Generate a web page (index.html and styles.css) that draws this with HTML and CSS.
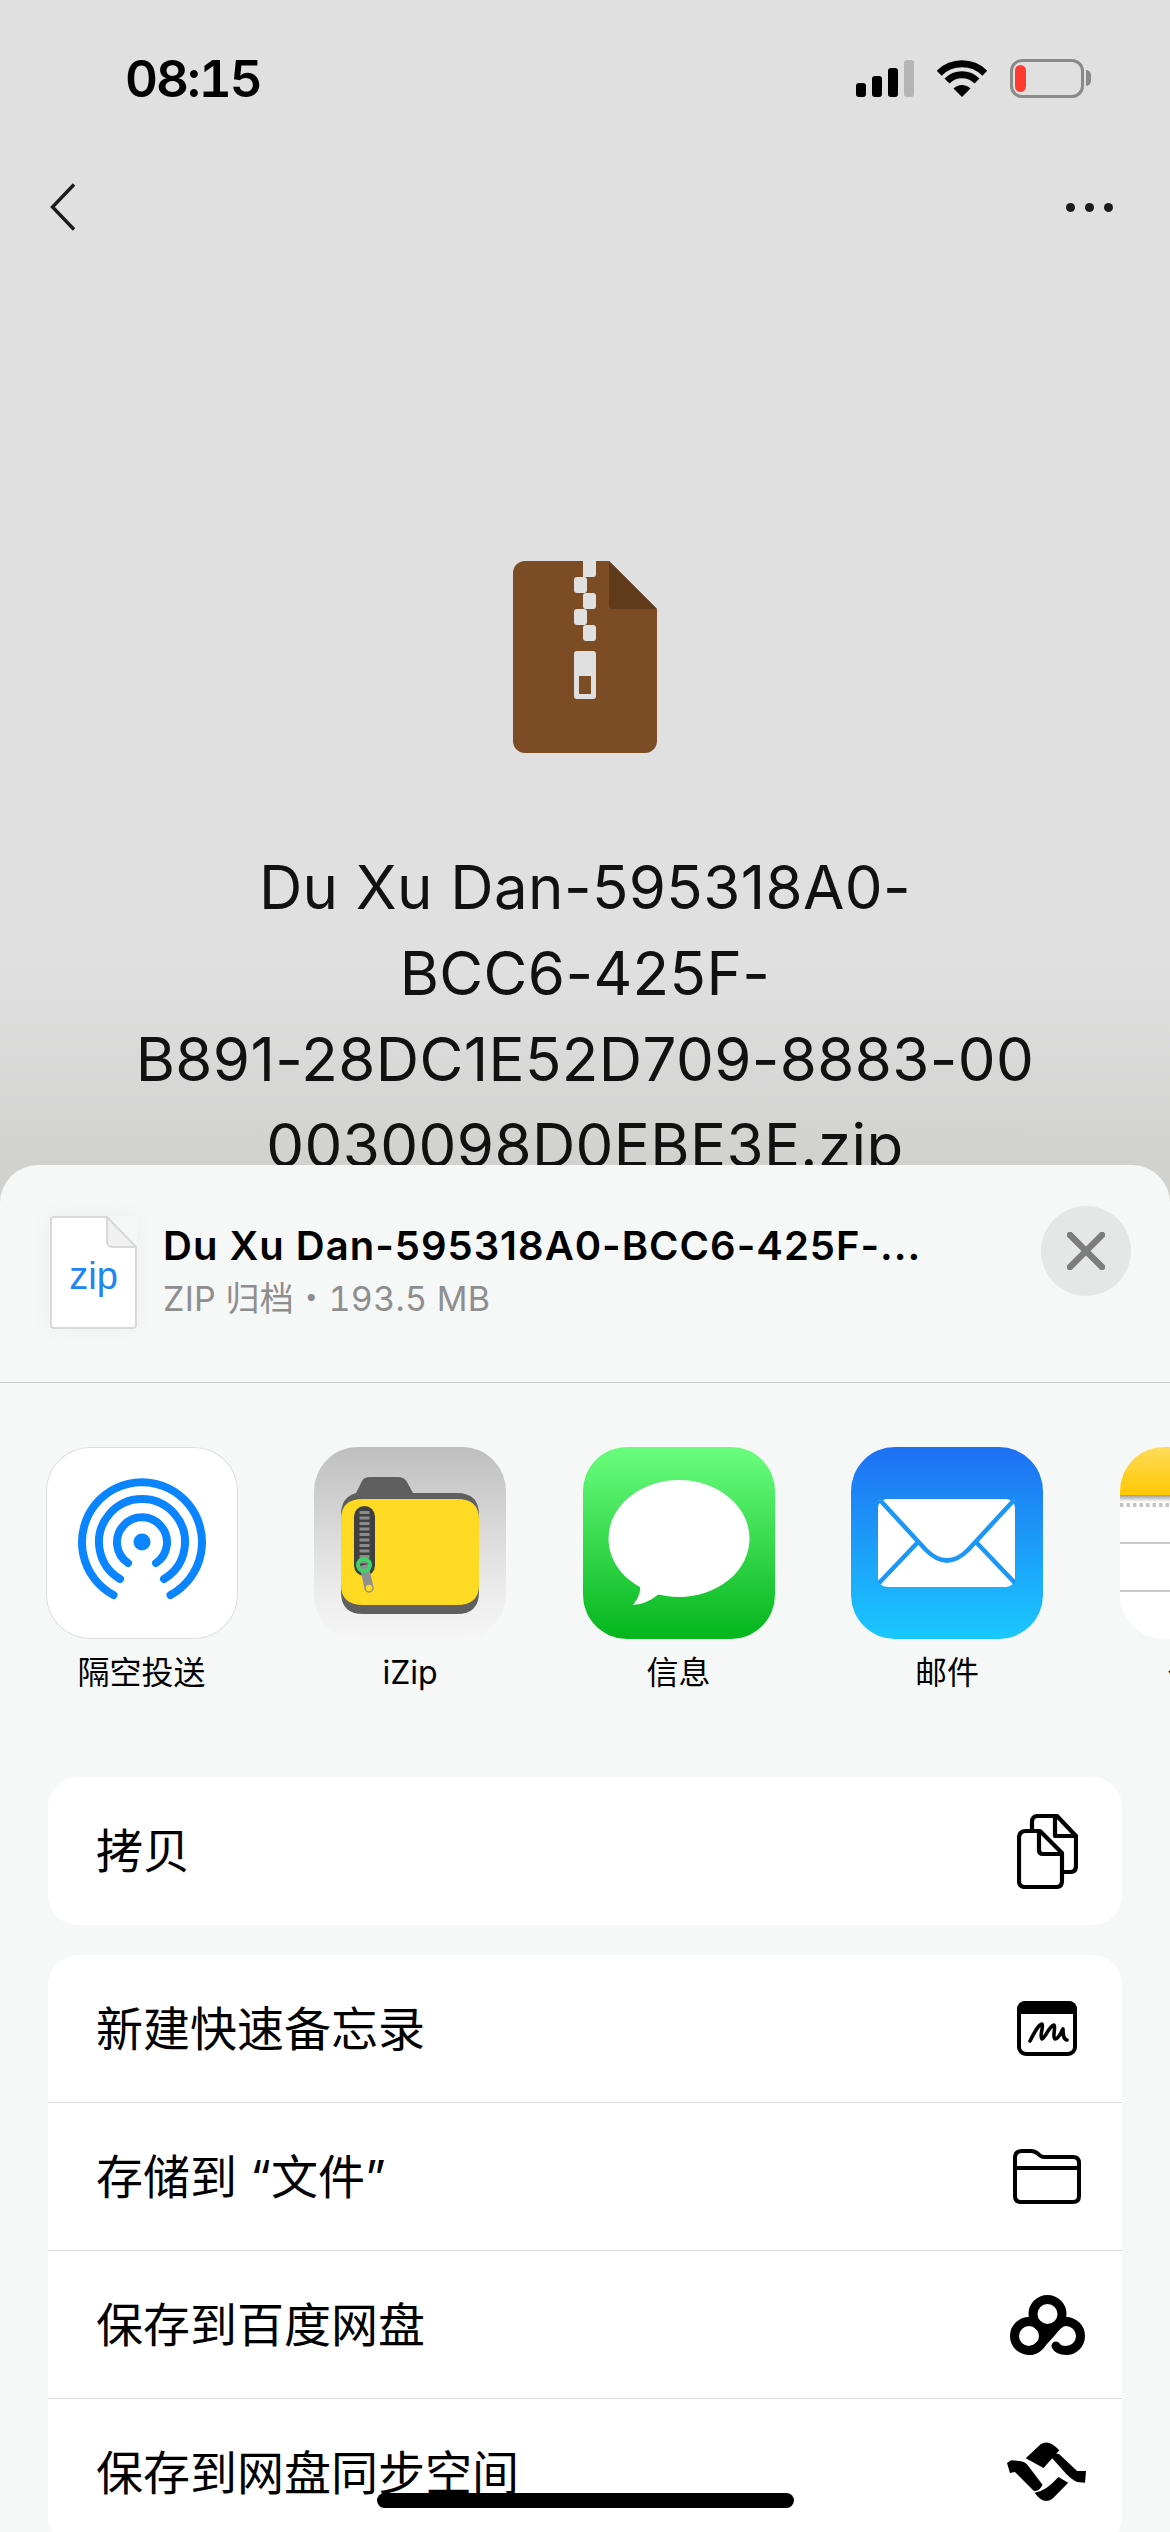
FILE: index.html
```html
<!DOCTYPE html>
<html lang="zh-CN">
<head>
<meta charset="utf-8">
<title>Share sheet</title>
<link rel="stylesheet" href="styles.css">
</head>
<body>
<div class="screen">
  <header class="status">
    <span class="time">08:15</span>
    <div class="status-icons">
      <div class="signal">
        <i class="bar b1"></i><i class="bar b2"></i><i class="bar b3"></i><i class="bar b4"></i>
      </div>
      <svg class="wifi" viewBox="0 0 50 37"><g fill="none" stroke="#000" stroke-width="7"><path d="M2.2 13.2A32.5 32.5 0 0 1 47.8 13.2"/><path d="M10 21A21 21 0 0 1 40 21"/></g><path d="M16.5 28.5A12 12 0 0 1 33.5 28.5L25 37Z" fill="#000"/></svg>
      <div class="battery"><div class="battery-body"><i class="battery-level"></i></div><i class="battery-nub"></i></div>
    </div>
  </header>
  <nav class="nav">
    <svg class="back" viewBox="0 0 26 48"><path d="M24 1.5L2.5 24L24 46.5" fill="none" stroke="#1c1c1c" stroke-width="3.4"/></svg>
    <div class="more"><i></i><i></i><i></i></div>
  </nav>
  <main class="preview">
    <svg class="zip-big" viewBox="0 0 144 192">
      <path d="M12 0H96L144 48V180A12 12 0 0 1 132 192H12A12 12 0 0 1 0 180V12A12 12 0 0 1 12 0Z" fill="#7c4c25"/>
      <path d="M96 0L144 48H100A4 4 0 0 1 96 44Z" fill="#5f3b1c"/>
      <g fill="#e0e0e0">
        <path d="M70 0H83V13A3 3 0 0 1 80 16H70Z"/>
        <rect x="61" y="16" width="13" height="16" rx="3"/>
        <rect x="70" y="32" width="13" height="16" rx="3"/>
        <rect x="61" y="48" width="13" height="16" rx="3"/>
        <rect x="70" y="64" width="13" height="16" rx="3"/>
        <path fill-rule="evenodd" d="M64 90H80A3 3 0 0 1 83 93V135A3 3 0 0 1 80 138H64A3 3 0 0 1 61 135V93A3 3 0 0 1 64 90ZM66 115V133H78V115Z"/>
      </g>
    </svg>
    <h1 class="doc-title">Du Xu Dan-595318A0-<br>BCC6-425F-<br>B891-28DC1E52D709-8883-00<br>0030098D0EBE3E.zip</h1>
  </main>

  <section class="sheet">
    <div class="sheet-head">
      <div class="file-icon">
        <svg class="file-shape" viewBox="0 0 87 113"><path d="M3 1H57L86 31V109A3 3 0 0 1 83 112H4A3 3 0 0 1 1 109V3A2 2 0 0 1 3 1Z" fill="#fff" stroke="#d9d9d9" stroke-width="2"/><path d="M57 1L86 31H62A5 5 0 0 1 57 26Z" fill="#f0f0f0" stroke="#d9d9d9" stroke-width="2"/></svg>
        <span class="file-ext">zip</span>
      </div>
      <div class="file-meta">
        <div class="file-name">Du Xu Dan-595318A0-BCC6-425F-...</div>
        <div class="file-sub">ZIP 归档・193.5 MB</div>
      </div>
      <div class="close">
        <svg viewBox="0 0 38 38"><path d="M3 3L35 35M35 3L3 35" stroke="#7d7d7d" stroke-width="6.5" stroke-linecap="round"/></svg>
      </div>
    </div>

    <div class="apps">
      <div class="app">
        <div class="app-icon airdrop">
          <svg viewBox="0 0 192 192"><g transform="translate(96 95)" fill="none" stroke="#0a84ff" stroke-linecap="round"><circle r="8.5" fill="#0a84ff" stroke="none"/><path stroke-width="8" d="M-28.5 53A60 60 0 1 1 28.5 53"/><path stroke-width="8" d="M-22 37A43 43 0 1 1 22 37"/><path stroke-width="8" d="M-14 21A25 25 0 1 1 14 21"/></g></svg>
        </div>
        <span class="app-label">隔空投送</span>
      </div>
      <div class="app">
        <div class="app-icon izip">
          <svg viewBox="0 0 192 192">
            <path d="M27 68Q27 50 42 46L48 34Q50 30 56 30H84Q90 30 93 35L99 46H143Q165 46 165 68V145Q165 167 143 167H49Q27 167 27 145Z" fill="#5f5f5f"/>
            <path d="M27 72Q27 52 49 52H143Q165 52 165 72V138Q165 158 143 158H49Q27 158 27 138Z" fill="#fedb22"/>
            <rect x="40" y="59" width="21" height="70" rx="10.5" fill="#3f3f3f"/>
            <path d="M50.5 64V122" stroke="#8b8b8b" stroke-width="10" stroke-dasharray="3 2.5"/>
            <path d="M50 118L55 141" stroke="#909090" stroke-width="9"/>
            <circle cx="50" cy="118" r="6" fill="none" stroke="#3fd46a" stroke-width="4"/>
            <circle cx="55" cy="141" r="4" fill="#fedb22" stroke="#909090" stroke-width="1.5"/>
          </svg>
        </div>
        <span class="app-label">iZip</span>
      </div>
      <div class="app">
        <div class="app-icon messages">
          <svg viewBox="0 0 192 192"><ellipse cx="96" cy="91.500" rx="70.500" ry="58.500" fill="#fff"/><path d="M56 135Q60 146 50 158Q62 158 76 147Z" fill="#fff"/></svg>
        </div>
        <span class="app-label">信息</span>
      </div>
      <div class="app">
        <div class="app-icon mail">
          <svg viewBox="0 0 192 192"><rect x="27" y="52" width="137" height="88" rx="9" fill="#fff"/><g fill="none" stroke="#1d97f7" stroke-width="4.500"><path d="M28 52L75 103Q96 124 117 103L164 52"/><path d="M28 136L68 94M164 136L124 94"/></g></svg>
        </div>
        <span class="app-label">邮件</span>
      </div>
      <div class="app">
        <div class="app-icon notes">
          <svg viewBox="0 0 192 192"><defs><linearGradient id="ng" x1="0" y1="0" x2="0" y2="1"><stop offset="0" stop-color="#fedb5c"/><stop offset="1" stop-color="#ffc800"/></linearGradient><linearGradient id="ns" x1="0" y1="0" x2="0" y2="1"><stop offset="0" stop-color="#9a9a9a"/><stop offset="1" stop-color="#fff"/></linearGradient></defs><rect width="192" height="48" fill="url(#ng)"/><rect y="48" width="192" height="7" fill="url(#ns)"/><path d="M0 58H192" stroke="#c4c4c4" stroke-width="4" stroke-dasharray="3.500 3"/><path d="M0 96H192M0 144H192" stroke="#c9c9c9" stroke-width="2"/></svg>
        </div>
        <span class="app-label">备忘录</span>
      </div>
    </div>

    <div class="actions">
      <div class="card">
        <div class="row row-first">
          <span class="row-label">拷贝</span>
          <span class="row-icon"><svg class="ic-copy" viewBox="0 0 61 75"><g fill="none" stroke="#000" stroke-width="4.200" stroke-linejoin="round"><path d="M15 17V8Q15 2 21 2H40L59 22V52Q59 58 53 58H47"/><path d="M38 2V22H59"/><path d="M9 17H23L45 39V67Q45 73 39 73H8Q2 73 2 67V24Q2 17 9 17Z" fill="#fff"/><path d="M22 17V36Q22 40 26 40H45"/></g></svg></span>
        </div>
      </div>
      <div class="card">
        <div class="row row-first">
          <span class="row-label">新建快速备忘录</span>
          <span class="row-icon"><svg class="ic-note" viewBox="0 0 60 55"><rect x="2" y="2" width="56" height="51" rx="7" fill="none" stroke="#000" stroke-width="4"/><path d="M8 0H52A8 8 0 0 1 60 8V13H0V8A8 8 0 0 1 8 0Z" fill="#000"/><path d="M13 40C17 32 21 24 25 23C27 25 22 36 25 38C29 36 32 25 37 24C39 27 35 36 38 38C42 38 44 31 46 28C46 33 46 38 50 39" fill="none" stroke="#000" stroke-width="3.600" stroke-linecap="round" stroke-linejoin="round"/></svg></span>
        </div>
        <div class="row">
          <span class="row-label">存储到 “文件”</span>
          <span class="row-icon"><svg class="ic-folder" viewBox="0 0 68 55"><g fill="none" stroke="#000" stroke-width="4"><path d="M2 19V9Q2 2 9 2H18Q21 2 24 4L27 6.500Q29 8 31 8H60Q66 8 66 14V47Q66 53 60 53H8Q2 53 2 47Z" stroke-linejoin="round"/><path d="M2 19H66"/></g></svg></span>
        </div>
        <div class="row">
          <span class="row-label">保存到百度网盘</span>
          <span class="row-icon"><svg class="ic-baidu" viewBox="0 0 75 60"><g fill="none" stroke="#000" stroke-width="9" stroke-linecap="round"><circle cx="37.500" cy="19" r="14.500"/><circle cx="19" cy="41" r="14.500"/><path d="M19 55.500C25 55.500 28 52 31 49L41 38C46 31 51 26.500 56 26.500A14.500 14.500 0 1 1 56 55.500C52 55.500 48 54.500 46 51"/></g><path d="M30 34H46L30 50Z" fill="#000"/></svg></span>
        </div>
        <div class="row">
          <span class="row-label">保存到网盘同步空间</span>
          <span class="row-icon"><svg class="ic-sync" viewBox="0 0 81 63"><path d="M19 17L34 3Q42-3 53 9L37 27Z"/><path d="M44 15Q48 11 53 13L71 30L80 30L79 42L71 41Q66 39 60 33Z"/><path d="M28 52Q40 50 52 36L62 42L46 58Q37 65 28 52Z"/><path d="M0 22L4 19L14 20Q17 20 20 23L36 44Q33 51 27 50L8 31L3 32Z"/></svg></span>
        </div>
      </div>
    </div>
  </section>
  <div class="home-bar"></div>
</div>
</body>
</html>
```
FILE: styles.css
```css
* { box-sizing: border-box; }
html, body { margin: 0; padding: 0; }
body {
  font-family: Inter, "Noto Sans CJK SC", sans-serif;
  color: #000;
}
svg { display: block; }
i { display: block; }

.screen {
  position: relative;
  width: 1170px;
  height: 2532px;
  overflow: hidden;
  background: linear-gradient(#e0e0e0 0, #e0e0e0 960px, #d1d2d0 1165px);
}

/* status bar */
.status {
  height: 156px;
  padding: 0 79px 0 125px;
  display: flex;
  align-items: center;
  justify-content: space-between;
}
.time { font-size: 51px; font-weight: 600; font-variant-numeric: tabular-nums; letter-spacing: -2px; line-height: 1; }
.status-icons { display: flex; align-items: center; }
.signal { display: flex; align-items: flex-end; gap: 6px; height: 37px; margin-right: 23px; }
.bar { width: 10px; background: #000; border-radius: 3px; }
.b1 { height: 14px; }
.b2 { height: 21px; }
.b3 { height: 29px; }
.b4 { height: 37px; background: #b5b5b5; }
.wifi { width: 50px; height: 37px; margin-right: 23px; }
.battery { display: flex; align-items: center; gap: 2px; }
.battery-body {
  width: 74px; height: 39px;
  border: 3px solid #8a8a8a;
  border-radius: 12px;
  padding: 3px 2px;
}
.battery-level { width: 11px; height: 100%; background: #ff3b30; border-radius: 6px; }
.battery-nub { width: 5px; height: 16px; background: #8a8a8a; border-radius: 0 5px 5px 0; }

/* nav */
.nav {
  height: 102px;
  padding: 0 57px 0 50px;
  display: flex;
  align-items: center;
  justify-content: space-between;
}
.back { width: 26px; height: 48px; }
.more { display: flex; gap: 10px; }
.more i { width: 9px; height: 9px; border-radius: 50%; background: #1c1c1c; }

/* preview */
.preview {
  padding-top: 303px;
  display: flex;
  flex-direction: column;
  align-items: center;
}
.zip-big { width: 144px; height: 192px; }
.doc-title {
  margin: 91px 0 0;
  font-size: 60px;
  font-weight: 400;
  letter-spacing: 0.4px;
  line-height: 86px;
  text-align: center;
  color: #111;
  white-space: nowrap;
}

/* sheet */
.sheet {
  position: absolute;
  top: 1165px;
  left: 0;
  right: 0;
  bottom: 0;
  background: #f6f7f7;
  border-radius: 38px 38px 0 0;
  overflow: hidden;
}
.sheet-head {
  height: 218px;
  border-bottom: 1px solid #c8c8c8;
  padding: 0 39px 0 50px;
  display: flex;
  align-items: flex-start;
}
.file-icon { position: relative; width: 87px; height: 113px; margin-top: 51px; flex: none; box-shadow: 0 0 24px rgba(0,0,0,.04); }
.file-shape { width: 87px; height: 113px; }
.file-ext {
  position: absolute;
  left: 0; right: 0; top: 38px;
  text-align: center;
  font-family: "Liberation Sans", sans-serif;
  font-size: 38px;
  line-height: 44px;
  color: #1c86f2;
}
.file-meta { flex: 1; margin: 0 0 0 26px; padding-top: 58px; }
.file-name { font-size: 40px; font-weight: 600; letter-spacing: 1px; line-height: 46px; white-space: nowrap; color: #000; }
.file-sub { margin-top: 9px; font-size: 34px; font-variant-numeric: tabular-nums; letter-spacing: 0.3px; line-height: 42px; color: #8e8e8e; }
.close {
  width: 90px; height: 90px;
  margin-top: 41px;
  border-radius: 50%;
  background: #e5e6e6;
  display: flex;
  align-items: center;
  justify-content: center;
  flex: none;
}
.close svg { width: 38px; height: 38px; }

.apps {
  padding: 64px 0 0 45.5px;
  display: flex;
  gap: 76.5px;
  width: 1400px;
}
.app { width: 192px; flex: none; display: flex; flex-direction: column; align-items: center; gap: 14px; }
.app-icon { width: 192px; height: 192px; border-radius: 44px; overflow: hidden; }
.app-icon svg { width: 192px; height: 192px; }
.app-label { font-size: 32px; line-height: 40px; white-space: nowrap; color: #000; }
.airdrop { background: #fff; box-shadow: inset 0 0 0 1px #dedede; }
.izip { background: linear-gradient(#bfbfbf 0, #ececec 75%, #f6f6f6 100%); }
.messages { background: linear-gradient(#6bfe7e, #04b51d); }
.mail { background: linear-gradient(#1e70f2, #1ac8ff); }
.notes { background: #fff; }

.actions { margin: 84px 48px 0; display: flex; flex-direction: column; gap: 30px; }
.card { background: #fff; border-radius: 30px; overflow: hidden; }
.row {
  height: 148px;
  border-top: 1px solid #d9d9d9;
  padding: 0 35px 0 48px;
  display: flex;
  align-items: center;
  justify-content: space-between;
}
.row-first { border-top: 0; height: 148px; }
.card + .card .row-first { height: 147px; }
.row-label { font-size: 47px; line-height: 60px; color: #000; white-space: nowrap; }
.row-icon { width: 80px; display: flex; justify-content: center; }
.ic-copy { width: 61px; height: 75px; }
.ic-note { width: 60px; height: 55px; }
.ic-folder { width: 68px; height: 55px; }
.ic-baidu { width: 75px; height: 60px; }
.ic-sync { width: 81px; height: 63px; }

.home-bar {
  position: absolute;
  left: 377px;
  top: 2493px;
  width: 417px;
  height: 15px;
  border-radius: 8px;
  background: #000;
}
```
